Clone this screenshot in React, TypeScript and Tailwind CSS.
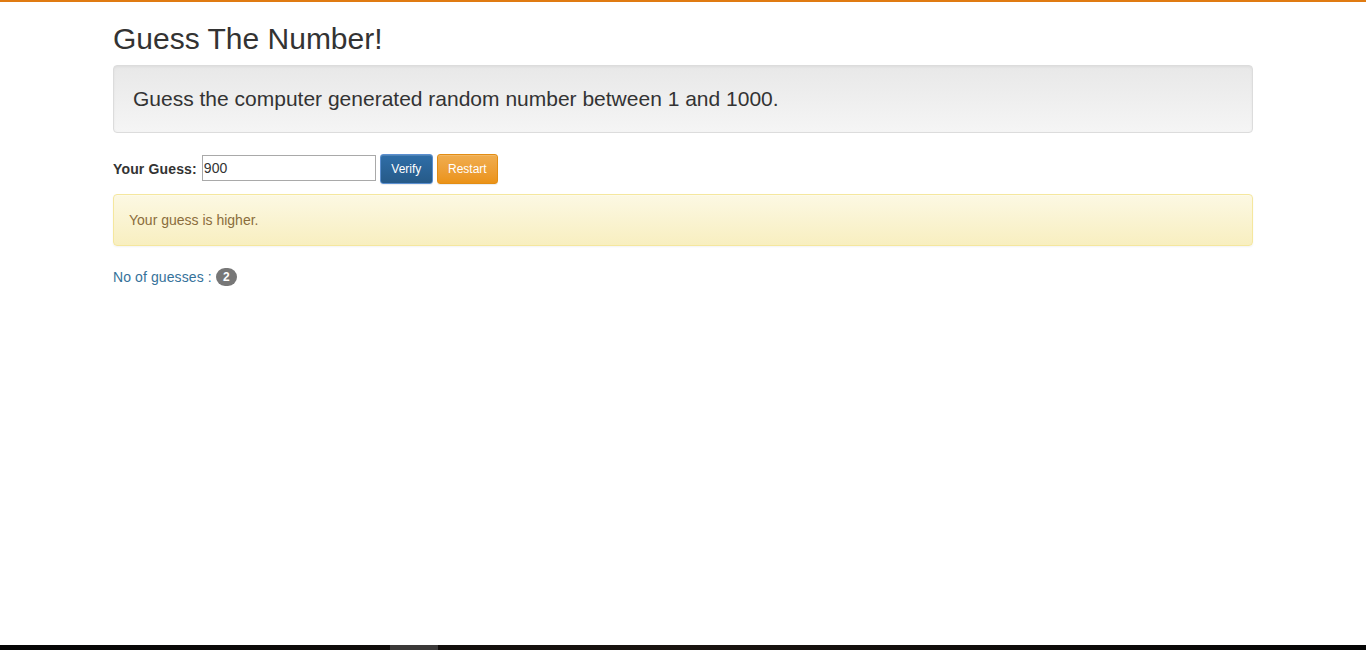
import React from "react";

export default function App() {
  return (
    <div
      className="h-[650px] flex flex-col bg-white text-[#333] text-[14px] leading-[20px]"
      style={{ fontFamily: '"Liberation Sans", Arial, Helvetica, sans-serif' }}
    >
      <div className="h-[2px] bg-[#e07b12]" />
      <div className="flex-1">
        <div className="w-[1140px] mx-auto">
          <h2 className="mt-[20px] mb-[10px] text-[30px] leading-[33px] font-normal text-[#333]">
            Guess The Number!
          </h2>
          <div className="mt-[1px] mb-[21px] h-[68px] px-[19px] flex items-center rounded-[4px] border border-[#dcdcdc] bg-gradient-to-b from-[#e8e8e8] to-[#f5f5f5] shadow-[inset_0_1px_3px_rgba(0,0,0,0.05),0_1px_0_rgba(255,255,255,0.1)]">
            <p className="text-[21px] leading-[28px] text-[#333]">
              Guess the computer generated random number between 1 and 1000.
            </p>
          </div>
          <div className="flex items-center h-[30px]">
            <label className="font-bold text-[14px] text-[#333] mr-[5px] tracking-[0.15px]">Your Guess:</label>
            <input
              defaultValue="900"
              className="self-start mt-[1px] w-[174px] h-[26px] border border-[#a9a9a9] px-[1px] text-[14px] text-[#333] outline-none"
            />
            <button className="ml-[4px] h-[30px] w-[53px] rounded-[3px] border border-[#5b8fd0] text-white text-[12px] bg-gradient-to-b from-[#2f6ea8] to-[#265a88] shadow-[inset_0_1px_0_rgba(255,255,255,0.15),0_1px_1px_rgba(0,0,0,0.075)]">
              Verify
            </button>
            <button className="ml-[4px] h-[30px] w-[61px] rounded-[3px] border border-[#e38d13] text-white text-[12px] bg-gradient-to-b from-[#f0ad4e] to-[#eb9316] shadow-[inset_0_1px_0_rgba(255,255,255,0.15),0_1px_1px_rgba(0,0,0,0.075)]">
              Restart
            </button>
          </div>
          <div className="mt-[10px] mb-[20px] h-[52px] px-[15px] flex items-center rounded-[4px] border border-[#f5e79e] bg-gradient-to-b from-[#fcf8e3] to-[#f8efc0] text-[#8a6d3b] shadow-[inset_0_1px_0_rgba(255,255,255,0.25),0_1px_2px_rgba(0,0,0,0.05)]">
            Your guess is higher.
          </div>
          <div className="flex items-center text-[#35729a] h-[22px]">
            <span className="tracking-[0.1px]">No of guesses :&nbsp;</span>
            <span className="inline-flex items-center justify-center h-[18px] min-w-[21px] px-[7px] rounded-[10px] bg-[#777] text-white text-[12px] font-bold leading-none">
              2
            </span>
          </div>
        </div>
      </div>
      <div className="h-[5px] flex bg-gradient-to-r from-[#050505] via-[#1a1410] to-[#050505]">
        <div className="w-[390px]" />
        <div className="w-[48px] bg-[#3b3938]" />
      </div>
    </div>
  );
}
